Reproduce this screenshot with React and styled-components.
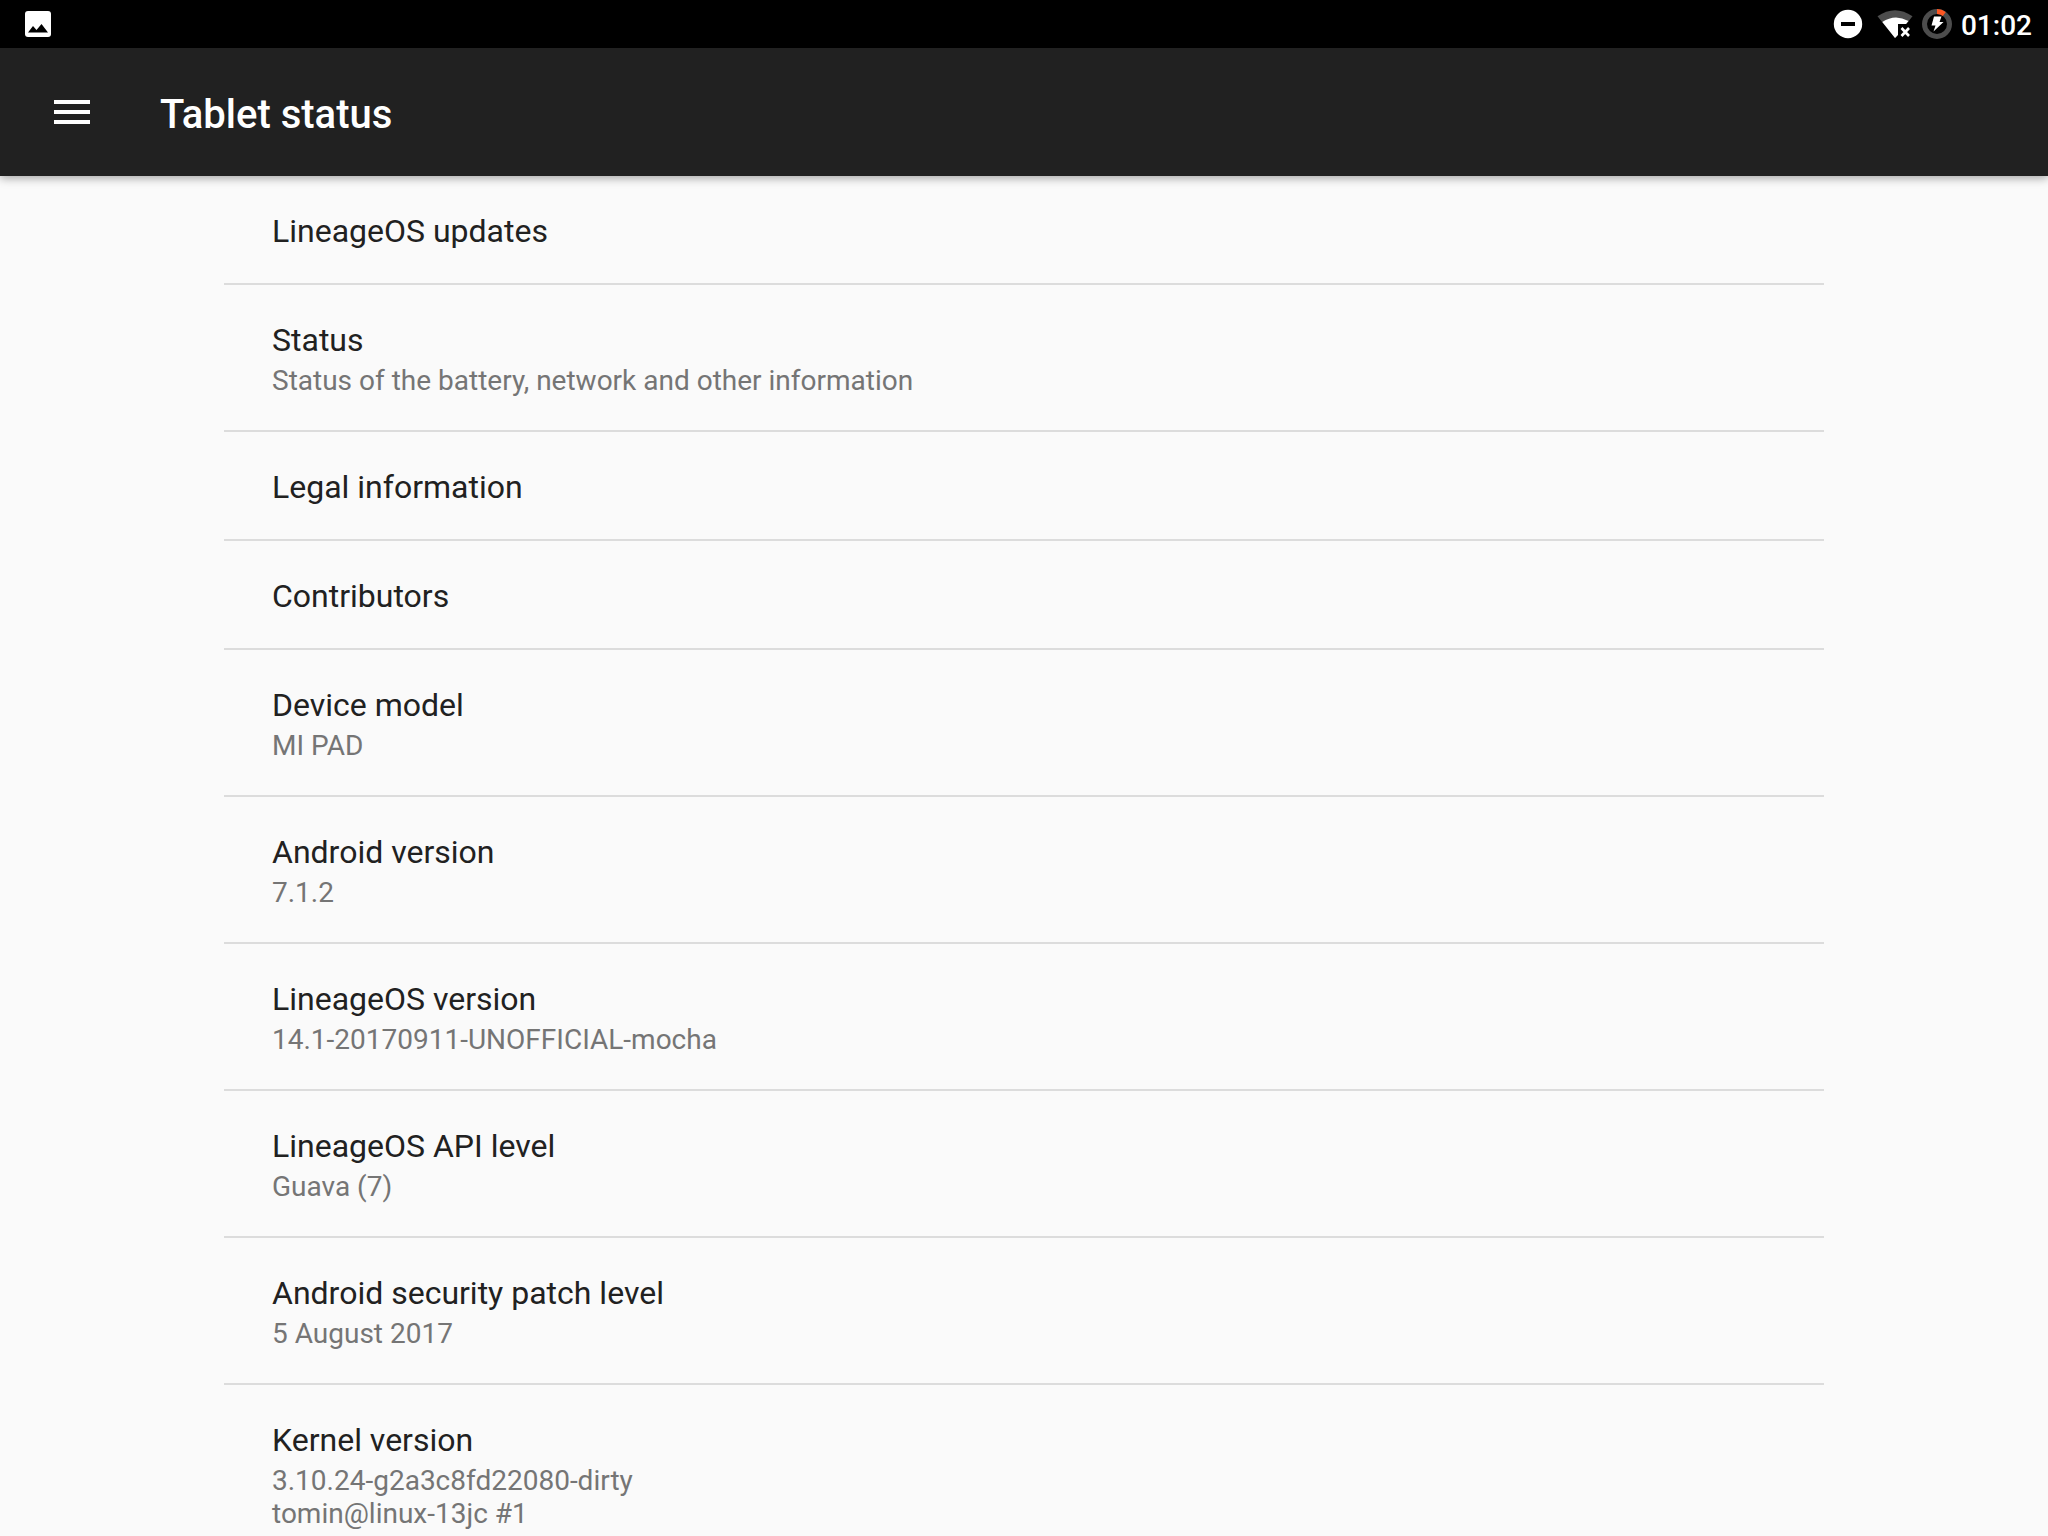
import React from "react";
import styled, { createGlobalStyle } from "styled-components";

const GlobalStyle = createGlobalStyle`
  *, *::before, *::after { box-sizing: border-box; }
  html, body, #root { height: 100%; }
  body {
    margin: 0;
    background: #fafafa;
    color: #212121;
    font-family: Roboto, sans-serif;
  }
`;

const Screen = styled.div`
  display: flex;
  flex-direction: column;
  height: 100vh;
  overflow: hidden;
`;

const StatusBar = styled.div`
  display: flex;
  flex: none;
  align-items: center;
  justify-content: space-between;
  height: 48px;
  padding: 0 16px 0 20px;
  background: #000;
  color: #fff;
`;

const StatusIcons = styled.div`
  display: flex;
  align-items: center;
`;

const StatusIcon = styled.svg`
  display: block;
  flex: none;
  width: ${(p) => p.$width}px;
  height: 48px;
`;

const Clock = styled.time`
  padding: 2px 0 0 5px;
  font-size: 28px;
  font-weight: 500;
  line-height: 33px;
`;

const Toolbar = styled.header`
  position: relative;
  z-index: 1;
  display: flex;
  flex: none;
  align-items: center;
  gap: 64px;
  height: 128px;
  padding: 0 48px;
  background: #212121;
  color: #fff;
  box-shadow: 0 2px 9px rgba(0, 0, 0, 0.36);
`;

const MenuButton = styled.button`
  display: block;
  width: 48px;
  height: 48px;
  padding: 0;
  border: 0;
  background: none;
  color: inherit;
`;

const MenuIcon = styled.svg`
  display: block;
  width: 48px;
  height: 48px;
`;

const Title = styled.h1`
  margin: 0;
  padding-top: 5px;
  font-size: 40px;
  font-weight: 500;
  line-height: 48px;
`;

const Content = styled.main`
  flex: 1;
  min-height: 0;
  padding: 0 224px;
  overflow: hidden;
`;

const List = styled.ul`
  margin: 0;
  padding: 0;
  list-style: none;
`;

const Item = styled.li`
  padding: 36px 48px 33px;
  border-bottom: 2px solid #dcdcdc;
`;

const ItemTitle = styled.h2`
  margin: 0;
  font-size: 32px;
  font-weight: 400;
  line-height: 38px;
`;

const Summary = styled.p`
  margin: 5px 0 0;
  color: #757575;
  font-size: 28px;
  line-height: 33px;
  white-space: pre-line;
`;

const items = [
  { title: "LineageOS updates" },
  { title: "Status", summary: "Status of the battery, network and other information" },
  { title: "Legal information" },
  { title: "Contributors" },
  { title: "Device model", summary: "MI PAD" },
  { title: "Android version", summary: "7.1.2" },
  { title: "LineageOS version", summary: "14.1-20170911-UNOFFICIAL-mocha" },
  { title: "LineageOS API level", summary: "Guava (7)" },
  { title: "Android security patch level", summary: "5 August 2017" },
  {
    title: "Kernel version",
    summary: "3.10.24-g2a3c8fd22080-dirty\ntomin@linux-13jc #1\nSun Sep 10 23:06:03 CEST 2017",
  },
];

export default function App() {
  return (
    <Screen>
      <GlobalStyle />
      <StatusBar>
        <StatusIcon $width={36} viewBox="0 0 36 48" aria-label="Screenshot captured">
          <rect x="5" y="11" width="26" height="26" rx="3" fill="#fff" />
          <path d="M8 32.5L13 26L16.5 30L21.5 24L28 32.5Z" fill="#000" />
        </StatusIcon>
        <StatusIcons>
          <StatusIcon $width={44} viewBox="1826 0 44 48" aria-label="Do not disturb">
            <circle cx="1848" cy="24" r="14.2" fill="#fff" />
            <path d="M1841 22h14v4h-14z" fill="#000" />
          </StatusIcon>
          <StatusIcon $width={48} viewBox="1870 0 48 48" aria-label="Wi-Fi without internet">
            <path d="M1877.5 16.3Q1895 4 1912.5 16.3L1895 38Z" fill="#4d4d4d" />
            <path d="M1882.3 22Q1895 13.5 1908.5 21L1906 24H1898V35L1895 38Z" fill="#fff" />
            <path d="M1898 24H1914V38H1898Z" fill="#000" />
            <path d="M1901.5 28L1909 36M1909 28L1901.5 36" stroke="#fff" strokeWidth="2.6" />
          </StatusIcon>
          <StatusIcon $width={38} viewBox="1918 0 38 48" aria-label="Battery charging">
            <circle cx="1937" cy="24" r="12.5" fill="none" stroke="#4d4d4d" strokeWidth="5" />
            <path d="M1937 11.5A12.5 12.5 0 0 1 1944.3 13.9" fill="none" stroke="#ff5722" strokeWidth="5" />
            <path d="M1934 16.5H1941.5L1939.5 22H1943.5L1933.5 31.5L1935.5 25.5H1931.5Z" fill="#fff" />
          </StatusIcon>
          <Clock>01:02</Clock>
        </StatusIcons>
      </StatusBar>
      <Toolbar>
        <MenuButton type="button" aria-label="Open navigation">
          <MenuIcon viewBox="0 0 48 48" aria-hidden="true">
            <path d="M6 12h36v4H6zM6 22h36v4H6zM6 32h36v4H6z" fill="currentColor" />
          </MenuIcon>
        </MenuButton>
        <Title>Tablet status</Title>
      </Toolbar>
      <Content>
        <List>
          {items.map((item) => (
            <Item key={item.title}>
              <ItemTitle>{item.title}</ItemTitle>
              {item.summary && <Summary>{item.summary}</Summary>}
            </Item>
          ))}
        </List>
      </Content>
    </Screen>
  );
}
